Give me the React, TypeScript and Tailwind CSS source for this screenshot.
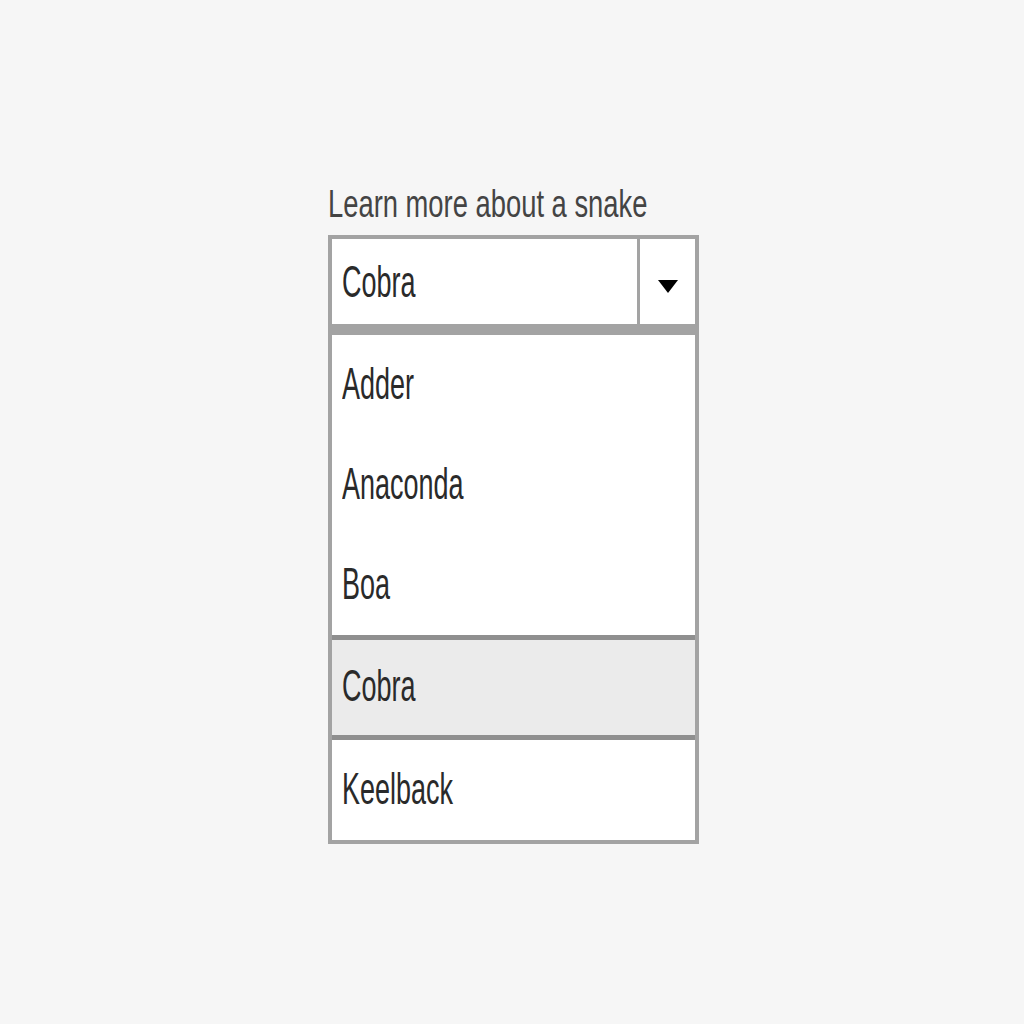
import { useState } from 'react';

const snakes = ['Adder', 'Anaconda', 'Boa', 'Cobra', 'Keelback'];

const font = { fontFamily: '"Liberation Sans", Arial, sans-serif' };

export default function App() {
  const [selected, setSelected] = useState('Cobra');

  return (
    <div className="min-h-screen bg-[#f6f6f6] pt-[185px] pl-[328px]" style={font}>
      <div className="w-[371px]">
        {/* Label */}
        <label className="block mb-[12px] text-[38px] leading-none text-[#444] whitespace-nowrap">
          <span className="inline-block origin-left scale-x-[0.72]">Learn more about a snake</span>
        </label>

        {/* Select box */}
        <div className="flex border-x-4 border-t-4 border-b-[11px] border-[#a3a3a3] bg-white">
          <div className="flex-1 h-[85px] flex items-center pl-[10px] text-[45px] leading-none text-[#2a2a2a]">
            <span className="inline-block origin-left scale-x-[0.6]">{selected}</span>
          </div>
          <div className="w-[3px] bg-[#a3a3a3] -mb-[8px]" />
          <div className="w-[55px] flex items-center justify-center pt-[8px]">
            <svg width="20" height="16" viewBox="0 0 20 16">
              <path d="M0 2 H20 L10 15 Z" fill="#000" />
            </svg>
          </div>
        </div>

        {/* Listbox */}
        <ul className="border-x-4 border-b-4 border-[#a3a3a3] bg-white">
          {snakes.map((name) => {
            const active = name === selected;
            return (
              <li
                key={name}
                onClick={() => setSelected(name)}
                className={`flex items-center pl-[10px] pb-[4px] text-[45px] leading-none text-[#2a2a2a] cursor-pointer ${
                  active ? 'h-[105px] border-y-[5px] border-[#8f8f8f] bg-[#ebebeb]' : 'h-[100px]'
                }`}
              >
                <span className="inline-block origin-left scale-x-[0.6]">{name}</span>
              </li>
            );
          })}
        </ul>
      </div>
    </div>
  );
}
